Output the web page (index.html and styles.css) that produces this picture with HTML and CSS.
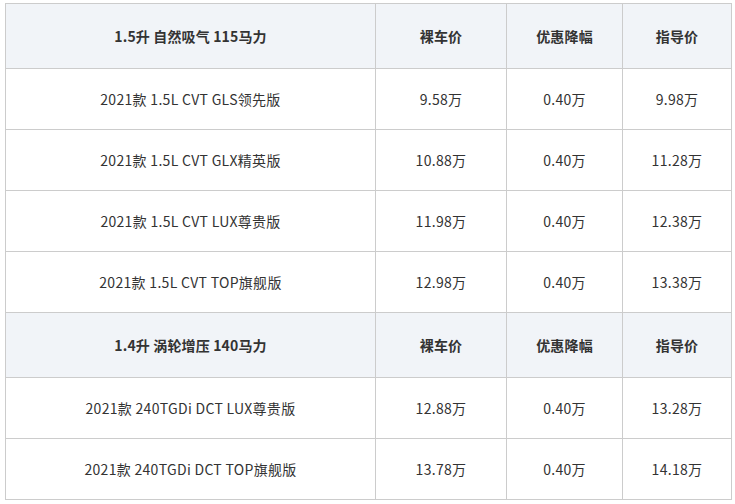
FILE: index.html
```html
<!DOCTYPE html>
<html lang="zh-CN">
<head>
<meta charset="utf-8">
<title>价格表</title>
<link rel="stylesheet" href="styles.css">
</head>
<body>
<table class="price-table">
  <colgroup>
    <col class="c-name">
    <col class="c-price">
    <col class="c-disc">
    <col class="c-guide">
  </colgroup>
  <tbody>
    <tr class="head">
      <td>1.5升 自然吸气 115马力</td>
      <td>裸车价</td>
      <td>优惠降幅</td>
      <td>指导价</td>
    </tr>
    <tr class="row">
      <td>2021款 1.5L CVT GLS领先版</td>
      <td>9.58万</td>
      <td>0.40万</td>
      <td>9.98万</td>
    </tr>
    <tr class="row">
      <td>2021款 1.5L CVT GLX精英版</td>
      <td>10.88万</td>
      <td>0.40万</td>
      <td>11.28万</td>
    </tr>
    <tr class="row">
      <td>2021款 1.5L CVT LUX尊贵版</td>
      <td>11.98万</td>
      <td>0.40万</td>
      <td>12.38万</td>
    </tr>
    <tr class="row">
      <td>2021款 1.5L CVT TOP旗舰版</td>
      <td>12.98万</td>
      <td>0.40万</td>
      <td>13.38万</td>
    </tr>
    <tr class="head">
      <td>1.4升 涡轮增压 140马力</td>
      <td>裸车价</td>
      <td>优惠降幅</td>
      <td>指导价</td>
    </tr>
    <tr class="row">
      <td>2021款 240TGDi DCT LUX尊贵版</td>
      <td>12.88万</td>
      <td>0.40万</td>
      <td>13.28万</td>
    </tr>
    <tr class="row">
      <td>2021款 240TGDi DCT TOP旗舰版</td>
      <td>13.78万</td>
      <td>0.40万</td>
      <td>14.18万</td>
    </tr>
  </tbody>
</table>
</body>
</html>
```

FILE: styles.css
```css
html, body {
  margin: 0;
  background: #ffffff;
}
body {
  padding: 3px 5px 0 5px;
  font-family: "Noto Sans CJK SC", "Noto Sans", sans-serif;
  font-size: 14px;
  color: #333333;
}
.price-table {
  width: 726px;
  border-collapse: collapse;
  table-layout: fixed;
}
.c-name { width: 370px; }
.c-price { width: 131px; }
.c-disc { width: 116px; }
.c-guide { width: 109px; }
.price-table td {
  border: 1px solid #cccccc;
  text-align: center;
  vertical-align: middle;
  padding: 0;
  line-height: 20px;
}
.head td {
  height: 64px;
  background: #f1f4f8;
  font-weight: bold;
  letter-spacing: 0.15px;
}
.row td {
  height: 60px;
  letter-spacing: 0.3px;
}
```
